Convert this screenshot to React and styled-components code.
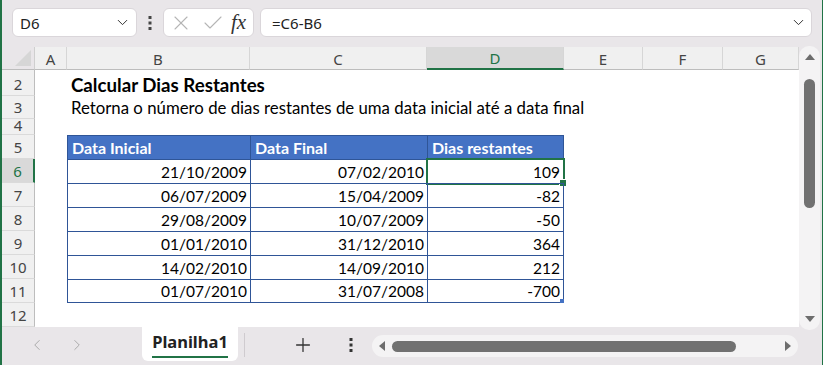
import React from "react";
import styled, { createGlobalStyle } from "styled-components";
import { ChevronDown, ChevronLeft, ChevronRight, X, Check, Plus } from "lucide-react";

const GlobalStyle = createGlobalStyle`
  html, body { margin: 0; padding: 0; background: #e9e6e9; }
  * { box-sizing: border-box; }
`;

const CELL_FONT = `Lato, "Liberation Sans", sans-serif`;
const UI_FONT = `"Noto Sans", "Open Sans", sans-serif`;
const GREEN = "#217346";
const TABLE_LINE = "#2f5597";

const Window = styled.div`
  width: 823px;
  height: 365px;
  background: #e9e6e9;
  border-left: 2px solid ${GREEN};
  border-right: 1px solid ${GREEN};
  display: flex;
  flex-direction: column;
  overflow: hidden;
`;

/* ---------- formula bar ---------- */
const FormulaBar = styled.div`
  height: 47px;
  flex: none;
  display: flex;
  align-items: flex-start;
  padding: 8px 10px 0 10px;
`;

const Field = styled.div`
  height: 29px;
  background: #fff;
  border: 1px solid #dad6da;
  border-radius: 6px;
  display: flex;
  align-items: center;
  font-family: ${UI_FONT};
  font-size: 15px;
  color: #222;
`;

const NameBox = styled(Field)`
  width: 125px;
  padding: 0 5px 0 7px;
  justify-content: space-between;
`;

const FxBox = styled(Field)`
  width: 91px;
  padding-left: 5px;
  gap: 8px;
`;

const FormulaBox = styled(Field)`
  flex: 1;
  margin-left: 6px;
  padding: 0 4px 0 11px;
  justify-content: space-between;
`;

const DotsSlot = styled.div`
  width: 26px;
  height: 29px;
  display: flex;
  align-items: center;
  justify-content: center;
`;

const FxLabel = styled.span`
  font-family: "Liberation Serif", serif;
  font-style: italic;
  font-size: 21px;
  color: #333;
  margin-left: -2px;
`;

const VDots = ({ color = "#444" }) => (
  <svg width="4" height="16" viewBox="0 0 4 16">
    <rect x="0.5" y="1" width="3" height="3" fill={color} />
    <rect x="0.5" y="6.5" width="3" height="3" fill={color} />
    <rect x="0.5" y="12" width="3" height="3" fill={color} />
  </svg>
);

/* ---------- sheet ---------- */
const Main = styled.div`
  height: 280px;
  flex: none;
  display: flex;
`;

const Grid = styled.div`
  width: 797px;
  height: 280px;
  background: #fff;
  display: grid;
  grid-template-columns: 33px 32px 183px 177px 137px 79px 80px 76px;
  grid-template-rows: 23px 26px 23px 16px 24px repeat(7, 24px);
`;

const Corner = styled.div`
  background: #e9e6e9;
  border-right: 1px solid #cfcfcf;
  border-bottom: 1px solid #bdbdbd;
  position: relative;
  svg { position: absolute; right: 3px; bottom: 3px; }
`;

const ColHead = styled.div`
  background: ${(p) => (p.$active ? "#d9d9d9" : "#f0f0f0")};
  border-right: 1px solid #d6d6d6;
  border-bottom: ${(p) => (p.$active ? `2px solid ${GREEN}` : "1px solid #bdbdbd")};
  color: ${(p) => (p.$active ? GREEN : "#444")};
  font-family: ${UI_FONT};
  font-size: 15px;
  display: flex;
  align-items: center;
  justify-content: center;
  padding-top: 1px;
`;

const RowHead = styled.div`
  background: ${(p) => (p.$active ? "#d9d9d9" : "#f0f0f0")};
  border-right: ${(p) => (p.$active ? `2px solid ${GREEN}` : "1px solid #bdbdbd")};
  border-bottom: 1px solid #dadada;
  color: ${(p) => (p.$active ? GREEN : "#444")};
  font-family: ${UI_FONT};
  font-size: 15px;
  display: flex;
  align-items: flex-end;
  justify-content: center;
  overflow: hidden;
  line-height: ${(p) => (p.$short ? "15px" : "20px")};
  padding-bottom: 1px;
`;

const Cell = styled.div`
  position: relative;
  font-family: ${CELL_FONT};
  font-size: ${(p) => (p.$size ? p.$size : 15.5)}px;
  line-height: 20px;
  white-space: nowrap;
  display: flex;
  align-items: flex-end;
  justify-content: ${(p) => (p.$align === "right" ? "flex-end" : "flex-start")};
  padding: 0 3px 1px 4px;
  color: #000;
  font-weight: ${(p) => (p.$bold ? 700 : 400)};
  background: ${(p) => (p.$head ? "#4472c4" : "transparent")};
  ${(p) => p.$head && "color: #fff;"}
  ${(p) =>
    p.$table &&
    `border-left: 1px solid ${TABLE_LINE}; border-top: 1px solid ${TABLE_LINE};`}
  ${(p) => p.$right && `border-right: 1px solid ${TABLE_LINE};`}
  ${(p) => p.$bottom && `border-bottom: 1px solid ${TABLE_LINE};`}
  z-index: ${(p) => (p.$overflow ? 2 : 1)};
`;

const Selection = styled.div`
  position: absolute;
  left: -2px;
  top: -2px;
  right: -2px;
  bottom: -2px;
  border: 2px solid ${GREEN};
  pointer-events: none;
  z-index: 3;
  &::after {
    content: "";
    position: absolute;
    right: -4px;
    bottom: -4px;
    width: 6px;
    height: 6px;
    background: ${GREEN};
    border: 1px solid #fff;
  }
`;

const ResizeMark = styled.div`
  position: absolute;
  right: -1px;
  bottom: -1px;
  width: 4px;
  height: 4px;
  background: #4472c4;
`;

/* ---------- vertical scrollbar ---------- */
const VScroll = styled.div`
  width: 21px;
  height: 284px;
  margin-top: -1px;
  background: #f4f3f4;
  border-radius: 10px;
  display: flex;
  flex-direction: column;
  align-items: center;
`;

const ArrowBox = styled.div`
  height: 22px;
  width: 100%;
  display: flex;
  align-items: center;
  justify-content: center;
  flex: none;
`;

const VThumb = styled.div`
  width: 11px;
  height: 129px;
  margin-top: 11px;
  border-radius: 6px;
  background: #717171;
`;

const Spacer = styled.div`
  flex: 1;
`;

/* ---------- sheet tabs ---------- */
const TabBar = styled.div`
  flex: 1;
  display: flex;
  align-items: flex-start;
`;

const NavGroup = styled.div`
  width: 140px;
  height: 36px;
  padding-left: 15px;
  display: flex;
  align-items: center;
`;

const NavButton = styled.div`
  width: 40px;
  display: flex;
  justify-content: center;
  color: #a9a9a9;
`;

const SheetTab = styled.div`
  width: 96px;
  height: 34px;
  background: #fff;
  border-radius: 0 0 6px 6px;
  display: flex;
  flex-direction: column;
  align-items: center;
  padding-top: 4px;
  font-family: ${UI_FONT};
  font-weight: 700;
  font-size: 16.5px;
  color: #222;
  span { line-height: 22px; }
  &::after {
    content: "";
    margin-top: 3px;
    width: 76px;
    height: 2px;
    background: ${GREEN};
  }
`;

const TabDivider = styled.div`
  width: 1px;
  height: 24px;
  margin: 6px 0 0 6px;
  background: #cfcbcf;
`;

const IconButton = styled.div`
  width: ${(p) => p.$w}px;
  height: 36px;
  margin-left: ${(p) => p.$ml}px;
  display: flex;
  align-items: center;
  justify-content: center;
  color: #333;
`;

const HScroll = styled.div`
  width: 426px;
  height: 22px;
  margin: 8px 0 0 11px;
  background: #f4f3f4;
  border-radius: 11px;
  display: flex;
  align-items: center;
  padding: 0 6px;
`;

const HThumb = styled.div`
  width: 344px;
  height: 11px;
  margin-left: 6px;
  border-radius: 6px;
  background: #717171;
`;

const Tri = ({ dir }) => {
  const pts = {
    up: "0,7 5,1 10,7",
    down: "0,1 5,7 10,1",
    left: "7,0 1,5 7,10",
    right: "1,0 7,5 1,10",
  }[dir];
  const vertical = dir === "up" || dir === "down";
  return (
    <svg width={vertical ? 10 : 8} height={vertical ? 8 : 10}>
      <polygon points={pts} fill="#6d6d6d" />
    </svg>
  );
};

const columns = ["A", "B", "C", "D", "E", "F", "G"];
const rowNumbers = [2, 3, 4, 5, 6, 7, 8, 9, 10, 11, 12];

const rows = [
  ["21/10/2009", "07/02/2010", "109"],
  ["06/07/2009", "15/04/2009", "-82"],
  ["29/08/2009", "10/07/2009", "-50"],
  ["01/01/2010", "31/12/2010", "364"],
  ["14/02/2010", "14/09/2010", "212"],
  ["01/07/2010", "31/07/2008", "-700"],
];

function renderRow(n) {
  const cells = columns.map((c) => <Cell key={c} />);
  if (n === 2) {
    cells[1] = (
      <Cell key="B" $bold $overflow $size={18.7}>
        Calcular Dias Restantes
      </Cell>
    );
  }
  if (n === 3) {
    cells[1] = (
      <Cell key="B" $overflow $size={16.8}>
        Retorna o número de dias restantes de uma data inicial até a data final
      </Cell>
    );
  }
  if (n === 5) {
    ["Data Inicial", "Data Final", "Dias restantes"].forEach((t, i) => {
      cells[i + 1] = (
        <Cell key={columns[i + 1]} $head $bold $table $right={i === 2} $size={16}>
          {t}
        </Cell>
      );
    });
  }
  if (n >= 6 && n <= 11) {
    const data = rows[n - 6];
    data.forEach((t, i) => {
      cells[i + 1] = (
        <Cell
          key={columns[i + 1]}
          $align="right"
          $table
          $right={i === 2}
          $bottom={n === 11}
        >
          {t}
          {n === 6 && i === 2 && <Selection />}
          {n === 11 && i === 2 && <ResizeMark />}
        </Cell>
      );
    });
  }
  return [
    <RowHead key={`h${n}`} $active={n === 6} $short={n === 4}>
      {n}
    </RowHead>,
    ...cells.map((c, i) => React.cloneElement(c, { key: `${n}-${i}` })),
  ];
}

export default function App() {
  return (
    <>
      <GlobalStyle />
      <Window>
        <FormulaBar>
          <NameBox>
            <span>D6</span>
            <ChevronDown size={17} strokeWidth={1.4} color="#333" />
          </NameBox>
          <DotsSlot>
            <VDots />
          </DotsSlot>
          <FxBox>
            <X size={24} strokeWidth={1.1} color="#b5b5b5" />
            <Check size={24} strokeWidth={1.1} color="#b5b5b5" />
            <FxLabel>fx</FxLabel>
          </FxBox>
          <FormulaBox>
            <span>=C6-B6</span>
            <ChevronDown size={17} strokeWidth={1.4} color="#333" />
          </FormulaBox>
        </FormulaBar>

        <Main>
          <Grid>
            <Corner>
              <svg width="16" height="16">
                <polygon points="16,0 16,16 0,16" fill="#d6d6d6" />
              </svg>
            </Corner>
            {columns.map((c) => (
              <ColHead key={c} $active={c === "D"}>
                {c}
              </ColHead>
            ))}
            {rowNumbers.map((n) => renderRow(n))}
          </Grid>
          <VScroll>
            <ArrowBox>
              <Tri dir="up" />
            </ArrowBox>
            <VThumb />
            <Spacer />
            <ArrowBox>
              <Tri dir="down" />
            </ArrowBox>
          </VScroll>
        </Main>

        <TabBar>
          <NavGroup>
            <NavButton>
              <ChevronLeft size={18} strokeWidth={1.3} />
            </NavButton>
            <NavButton>
              <ChevronRight size={18} strokeWidth={1.3} />
            </NavButton>
          </NavGroup>
          <SheetTab>
            <span>Planilha1</span>
          </SheetTab>
          <TabDivider />
          <IconButton $w={30} $ml={43}>
            <Plus size={22} strokeWidth={1.4} />
          </IconButton>
          <IconButton $w={20} $ml={23}>
            <VDots color="#333" />
          </IconButton>
          <HScroll>
            <Tri dir="left" />
            <HThumb />
            <Spacer />
            <Tri dir="right" />
          </HScroll>
        </TabBar>
      </Window>
    </>
  );
}
